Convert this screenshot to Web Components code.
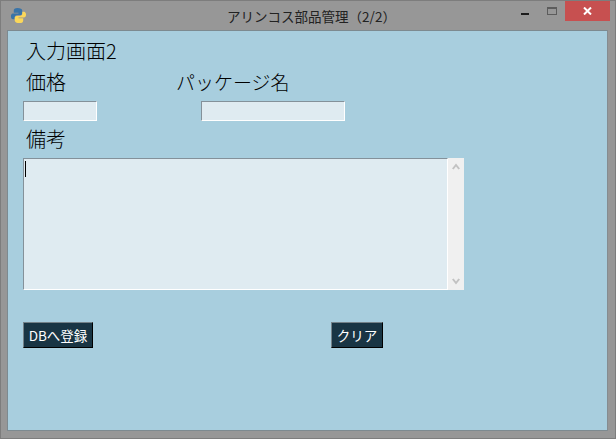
<!DOCTYPE html>
<html lang="ja">
<head>
<meta charset="utf-8">
<title>アリンコス部品管理</title>
<style>
  html, body { margin: 0; padding: 0; height: 100%; background: #979797; }
  body { font-family: "Noto Sans CJK JP", "Liberation Sans", sans-serif; }
</style>
</head>
<body>
<app-window window-title="アリンコス部品管理（2/2）">
  <form-text size="20" style="margin-left:3px">入力画面2</form-text>
  <form-row gap="110" style="margin-top:9px">
    <form-text size="20" style="margin-left:3px">価格</form-text>
    <form-text size="19">パッケージ名</form-text>
  </form-row>
  <form-row gap="104" style="margin-top:8px">
    <entry-box width="74"></entry-box>
    <entry-box width="144"></entry-box>
  </form-row>
  <form-text size="20" style="margin-left:3px;margin-top:7px">備考</form-text>
  <memo-box style="margin-top:8px"></memo-box>
  <form-row gap="238" style="margin-top:32px">
    <dark-button width="70">DBへ登録</dark-button>
    <dark-button width="52">クリア</dark-button>
  </form-row>
</app-window>

<script>
class AppWindow extends HTMLElement {
  constructor() {
    super();
    this.attachShadow({ mode: 'open' });
    const title = this.getAttribute('window-title') || '';
    this.shadowRoot.innerHTML = `
      <style>
        :host {
          display: flex;
          flex-direction: column;
          box-sizing: border-box;
          width: 616px;
          height: 439px;
          background: #979797;
          border: 1px solid #7d7d7d;
        }
        .bar {
          display: flex;
          align-items: flex-start;
          height: 29px;
          flex: none;
        }
        .icon { width: 17px; height: 17px; margin: 6px 0 0 9px; flex: none; }
        .title {
          flex: 1;
          text-align: center;
          font-size: 13.5px;
          line-height: 18px;
          margin-top: 6px;
          color: #222;
          padding-left: 85px;
          white-space: nowrap;
        }
        .btns { display: flex; align-items: flex-start; margin-right: 5px; flex: none; }
        .btn { display: flex; justify-content: center; height: 20px; box-sizing: border-box; }
        .min { width: 28px; padding-top: 12px; }
        .max { width: 26px; padding-top: 6px; }
        .close { width: 45px; background: #c75050; padding-top: 6px; }
        .client {
          flex: 1;
          margin: 0 7px 7px 6px;
          box-sizing: border-box;
          background: #a8cede;
          border: 1px solid #7d8a90;
          border-right-color: #858c90;
          padding: 9px 14px 0 15px;
          display: flex;
          flex-direction: column;
          align-items: flex-start;
        }
      </style>
      <div class="bar">
        <svg class="icon" viewBox="0 0 18 18">
          <path d="M8 1C5 1 4 2 4 4v2h5v1H3C1.500 7 1 8.500 1 10s.8 3 2.200 3H5v-2c0-1.500 1-2.500 3-2.500h3c1 0 2-1 2-2V4c0-2-2-3-5-3z" fill="#3a74a8"/>
          <path d="M10 17c3 0 4-1 4-3v-2H9v-1h6c1.500 0 2-1.500 2-3s-.8-3-2.200-3H13v2c0 1.500-1 2.500-3 2.500H7c-1 0-2 1-2 2V14c0 2 2 3 5 3z" fill="#fbd75a"/>
        </svg>
        <div class="title">${title}</div>
        <div class="btns">
          <div class="btn min"><svg width="8" height="2"><rect width="8" height="2" fill="#1c1c1c"/></svg></div>
          <div class="btn max"><svg width="10" height="8"><rect x=".5" y=".5" width="9" height="7" fill="none" stroke="#5c5c5c"/><rect width="10" height="2" fill="#5c5c5c"/></svg></div>
          <div class="btn close"><svg width="9" height="8" viewBox="0 0 9 8"><path d="M1 .5l7 7M8 .5l-7 7" stroke="#fff" stroke-width="2"/></svg></div>
        </div>
      </div>
      <div class="client"><slot></slot></div>
    `;
  }
}

class FormText extends HTMLElement {
  constructor() {
    super();
    this.attachShadow({ mode: 'open' });
    const size = this.getAttribute('size') || 20;
    this.shadowRoot.innerHTML = `
      <style>
        :host { display: block; font-size: ${size}px; line-height: 22px; font-weight: 300; color: #000; white-space: nowrap; }
      </style>
      <slot></slot>
    `;
  }
}

class FormRow extends HTMLElement {
  constructor() {
    super();
    this.attachShadow({ mode: 'open' });
    const gap = this.getAttribute('gap') || 0;
    this.shadowRoot.innerHTML = `
      <style>
        :host { display: flex; gap: ${gap}px; align-items: flex-start; }
      </style>
      <slot></slot>
    `;
  }
}

class EntryBox extends HTMLElement {
  constructor() {
    super();
    this.attachShadow({ mode: 'open' });
    const width = this.getAttribute('width') || 75;
    this.shadowRoot.innerHTML = `
      <style>
        :host {
          display: block;
          box-sizing: border-box;
          width: ${width}px;
          height: 20px;
          background: #dfebf1;
          border: 1px solid #fff;
          border-top-color: #84919a;
          border-left-color: #84919a;
        }
      </style>
    `;
  }
}

class MemoBox extends HTMLElement {
  constructor() {
    super();
    this.attachShadow({ mode: 'open' });
    this.shadowRoot.innerHTML = `
      <style>
        :host { display: flex; width: 441px; height: 132px; }
        .text {
          flex: 1;
          box-sizing: border-box;
          background: #dfebf1;
          border: 1px solid #fff;
          border-top-color: #84919a;
          border-left-color: #84919a;
          padding: 2px 0 0 1px;
        }
        .caret { width: 1px; height: 16px; background: #000; }
        .scroll {
          width: 16px;
          background: #f0f0f0;
          display: flex;
          flex-direction: column;
          justify-content: space-between;
          align-items: center;
          padding: 5px 0;
          box-sizing: border-box;
        }
      </style>
      <div class="text"><div class="caret"></div></div>
      <div class="scroll">
        <svg width="8" height="7"><path d="M.8 6L4 2l3.200 4" fill="none" stroke="#c2c2c2" stroke-width="2"/></svg>
        <svg width="8" height="7"><path d="M.8 1L4 5l3.200-4" fill="none" stroke="#c2c2c2" stroke-width="2"/></svg>
      </div>
    `;
  }
}

class DarkButton extends HTMLElement {
  constructor() {
    super();
    this.attachShadow({ mode: 'open' });
    const width = this.getAttribute('width') || 60;
    this.shadowRoot.innerHTML = `
      <style>
        :host {
          display: flex;
          align-items: center;
          justify-content: center;
          box-sizing: border-box;
          width: ${width}px;
          height: 26px;
          background: #193544;
          color: #fff;
          font-size: 13.5px;
          white-space: nowrap;
          border: 1px solid #000;
          border-top-color: #748188;
          border-left-color: #748188;
        }
      </style>
      <slot></slot>
    `;
  }
}

customElements.define('app-window', AppWindow);
customElements.define('form-text', FormText);
customElements.define('form-row', FormRow);
customElements.define('entry-box', EntryBox);
customElements.define('memo-box', MemoBox);
customElements.define('dark-button', DarkButton);
</script>
</body>
</html>
